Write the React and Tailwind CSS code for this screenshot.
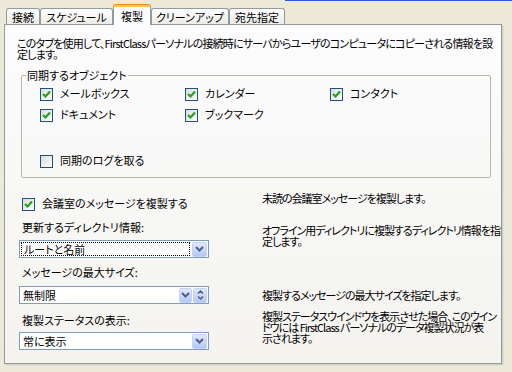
import React from 'react';

const font = "font-['MS_UI_Gothic','Noto_Sans_CJK_JP',sans-serif] [font-feature-settings:'palt']";

function Check({ checked }) {
    return (
        <span className="w-[13px] h-[13px] shrink-0 border border-[#1c5180] bg-gradient-to-br from-[#dcdcd6] to-white flex items-center justify-center">
            {checked && (
                <svg width="9" height="9" viewBox="0 0 9 9">
                    <path d="M1 4 L3.5 6.5 L8 1.5" stroke="#21a121" strokeWidth="2.2" fill="none" />
                </svg>
            )}
        </span>
    );
}

function CheckItem({ checked, label, className = '' }) {
    return (
        <div className={`flex items-center gap-[7px] ${className}`}>
            <Check checked={checked} />
            <span className="leading-[13px] whitespace-nowrap -mt-[2px]">{label}</span>
        </div>
    );
}

function ArrowBtn({ w = 'w-[15px]' }) {
    return (
        <div className={`${w} h-[15px] rounded-[2px] bg-gradient-to-b from-[#dfe8fd] to-[#b4c8f5] border border-[#c3d3fd] flex items-center justify-center`}>
            <svg width="9" height="6" viewBox="0 0 9 6">
                <path d="M1 1 L4.5 4.5 L8 1" stroke="#4d6185" strokeWidth="2" fill="none" />
            </svg>
        </div>
    );
}

function SpinBtn() {
    return (
        <div className="w-[14px] h-[15px] rounded-[2px] bg-gradient-to-b from-[#dfe8fd] to-[#b4c8f5] border border-[#c3d3fd] flex flex-col items-center justify-center gap-[2px]">
            <svg width="7" height="4" viewBox="0 0 7 4"><path d="M1 3.5 L3.5 1 L6 3.5" stroke="#4d6185" strokeWidth="1.5" fill="none" /></svg>
            <svg width="7" height="4" viewBox="0 0 7 4"><path d="M1 0.5 L3.5 3 L6 0.5" stroke="#4d6185" strokeWidth="1.5" fill="none" /></svg>
        </div>
    );
}

function Select({ value, focus, spin }) {
    return (
        <div className="w-[190px] h-[18px] border border-[#7f9db9] bg-white flex items-center p-px">
            <div className={`flex-1 h-full flex items-center px-[2px] ${focus ? 'border border-dotted border-black' : ''}`}>
                <span className="leading-[13px] whitespace-nowrap">{value}</span>
            </div>
            <div className="flex ml-[2px] gap-px">
                <ArrowBtn w={spin ? 'w-[13px]' : 'w-[15px]'} />
                {spin && <SpinBtn />}
            </div>
        </div>
    );
}

function Tab({ label, w }) {
    return (
        <div className={`${w} h-[16px] border border-b-0 border-[#919b9c] rounded-t-[3px] bg-gradient-to-b from-white to-[#ecebe5] flex justify-center pt-[2px] leading-[13px]`}>
            {label}
        </div>
    );
}

export default function App() {
    return (
        <div className={`w-[512px] h-[372px] bg-[#ece9d8] overflow-hidden text-[11px] text-black ${font} relative`}>
            <div className="absolute top-0 left-[285px] right-0 h-px bg-[#2a5bd7]" />
            <div className="pt-[4px] pl-[4px]">
                {/* Tabs */}
                <div className="flex items-end h-[20px] pl-[2px]">
                    <Tab label="接続" w="w-[34px]" />
                    <Tab label="スケジュール" w="w-[73px]" />
                    <div className="w-[38px] h-[21px] -mb-px relative z-10 border-x border-[#919b9c] rounded-t-[3px] bg-[#fcfcfe] flex flex-col">
                        <div className="h-[3px] bg-[#ffc83c] rounded-t-[2px] border-t border-[#e68b2c]" />
                        <div className="flex justify-center pt-[3px] leading-[13px]">複製</div>
                    </div>
                    <Tab label="クリーンアップ" w="w-[78px]" />
                    <Tab label="宛先指定" w="w-[56px]" />
                </div>

                {/* Panel */}
                <div className="w-[498px] h-[340px] border border-[#919b9c] bg-gradient-to-b from-[#fcfcfe] to-[#f4f3ee] shadow-[1px_1px_0_#d0cec0,2px_2px_0_#e3e1d4] pl-[12px] pt-[13px]">
                    <p className="leading-[11px] whitespace-nowrap tracking-[-0.8px]">
                        このタブを使用して、FirstClassパーソナルの接続時にサーバからユーザのコンピュータにコピーされる情報を設<br />定します。
                    </p>

                    <fieldset className="ml-[4px] mt-[9px] w-[470px] border border-[#bab7a8] rounded-[2px] px-[4px] pb-[9px]">
                        <legend className="px-px leading-[13px]">同期するオブジェクト</legend>
                        <div className="pl-[14px]">
                            <div className="grid grid-cols-[145px_145px_145px] mt-[6px] gap-y-[8px]">
                                <CheckItem checked label="メールボックス" />
                                <CheckItem checked label="カレンダー" />
                                <CheckItem checked label="コンタクト" />
                                <CheckItem checked label="ドキュメント" />
                                <CheckItem checked label="ブックマーク" />
                            </div>
                            <CheckItem label="同期のログを取る" className="mt-[33px]" />
                        </div>
                    </fieldset>

                    <div className="flex mt-[20px]">
                        <div className="w-[245px] shrink-0 pl-[2px] flex flex-col">
                            <CheckItem checked label="会議室のメッセージを複製する" className="ml-[3px]" />
                            <div className="mt-[10px] ml-[3px] leading-[13px]">更新するディレクトリ情報:</div>
                            <div className="mt-[6px]"><Select value="ルートと名前" focus /></div>
                            <div className="mt-[8px] ml-[3px] leading-[13px]">メッセージの最大サイズ:</div>
                            <div className="mt-[7px]"><Select value="無制限" spin /></div>
                            <div className="mt-[10px] ml-[3px] leading-[13px]">複製ステータスの表示:</div>
                            <div className="mt-[5px]"><Select value="常に表示" /></div>
                        </div>
                        <div className="flex flex-col leading-[11px] whitespace-nowrap tracking-[-1px] -mt-[5px]">
                            <p>未読の会議室メッセージを複製します。</p>
                            <p className="mt-[21px]">オフライン用ディレクトリに複製するディレクトリ情報を指<br />定します。</p>
                            <p className="mt-[43px]">複製するメッセージの最大サイズを指定します。</p>
                            <p className="mt-[10px]">複製ステータスウインドウを表示させた場合、このウイン<br />ドウには FirstClass パーソナルのデータ複製状況が表<br />示されます。</p>
                        </div>
                    </div>
                </div>
            </div>
        </div>
    );
}
